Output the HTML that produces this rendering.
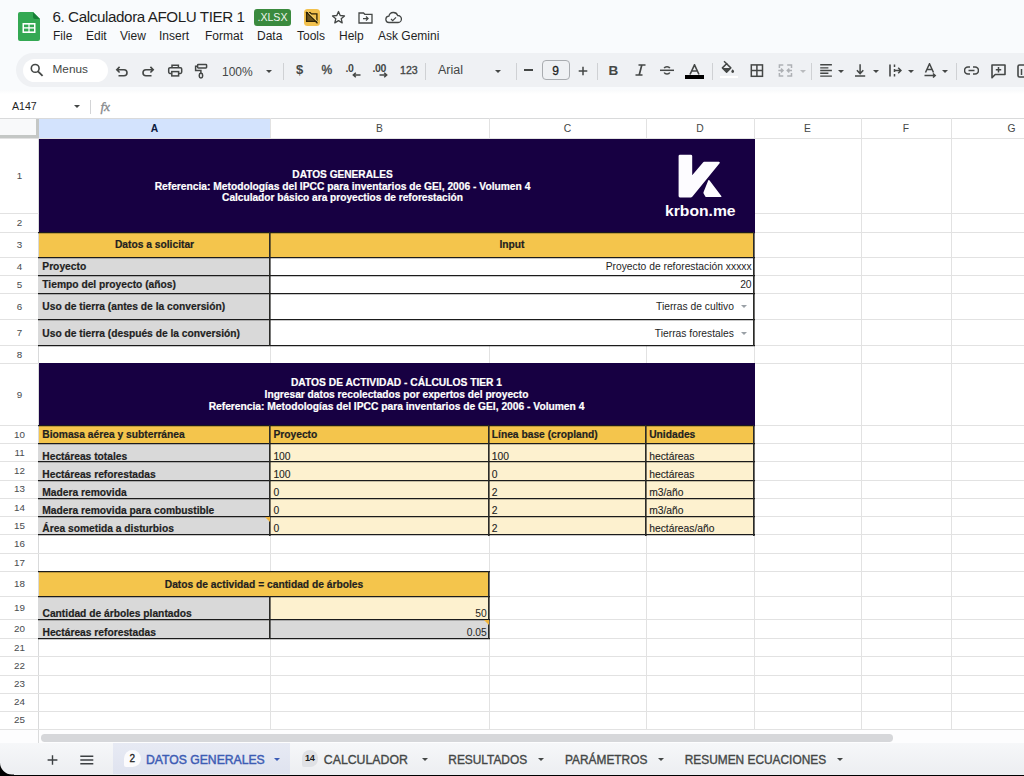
<!DOCTYPE html>
<html><head><meta charset="utf-8">
<style>
*{box-sizing:border-box;margin:0;padding:0}
html,body{width:1024px;height:776px;overflow:hidden;background:#f9fbfd;font-family:"Liberation Sans",sans-serif;position:relative}
.a{position:absolute}
.t{position:absolute;white-space:nowrap;line-height:1}
.b{font-weight:bold}
.menu{font-size:12px;color:#1f1f1f;top:30px}
.ico{position:absolute}
.tb{position:absolute;font-size:12px;color:#444746;white-space:nowrap;line-height:1}
.sep{position:absolute;top:62.5px;width:1px;height:17.5px;background:#cfd1d4}
.dd{position:absolute;width:0;height:0;border-left:3.5px solid transparent;border-right:3.5px solid transparent;border-top:3.5px solid #444746}
</style></head><body>

<!-- ===== TITLE BAR ===== -->
<svg class="ico" style="left:18px;top:12px" width="22" height="29" viewBox="0 0 22 29">
 <path d="M2 0H15L22 7V27a2 2 0 0 1-2 2H2a2 2 0 0 1-2-2V2a2 2 0 0 1 2-2z" fill="#34a853"/>
 <path d="M15 0L22 7H17a2 2 0 0 1-2-2z" fill="#188038"/>
 <rect x="4.5" y="11" width="13" height="10" fill="#fff"/>
 <rect x="6" y="12.6" width="4.4" height="2.6" fill="#34a853"/><rect x="11.6" y="12.6" width="4.4" height="2.6" fill="#34a853"/>
 <rect x="6" y="16.6" width="4.4" height="2.8" fill="#34a853"/><rect x="11.6" y="16.6" width="4.4" height="2.8" fill="#34a853"/>
</svg>
<div class="t" style="left:52.5px;top:8.6px;font-size:15.2px;color:#1f1f1f;word-spacing:-0.2px;letter-spacing:-0.38px">6. Calculadora AFOLU TIER 1</div>
<div class="a" style="left:254px;top:9px;width:37px;height:17px;background:#3a8a3e;border-radius:3px"></div>
<div class="t" style="left:254px;width:37px;text-align:center;top:12.3px;font-size:10.6px;color:#eef5ee">.XLSX</div>
<div class="a" style="left:303.7px;top:8.8px;width:16.2px;height:17px;background:#f2c14e;border-radius:3.5px"></div>
<svg class="ico" style="left:300px;top:6px" width="24" height="24" viewBox="300 6 24 24"><path d="M306.6 13.2L314.6 21.3H306.6z" fill="#3b2c0a" opacity="0.75"/><path d="M306.6 12.6h3.6l1.1 1.3h5.6v7.4h-10.3z" fill="none" stroke="#2e2306" stroke-width="1.3"/><path d="M306 12l11.5 11.2" stroke="#2e2306" stroke-width="1.3"/><path d="M307.3 11.3l10.8 10.6" stroke="#e9d37a" stroke-width="0.9"/></svg>
<svg class="ico" style="left:331px;top:10px" width="15" height="15" viewBox="0 0 15 15"><path d="M7.5 1.5l1.7 4 4.3.4-3.3 2.8 1 4.2-3.7-2.3-3.7 2.3 1-4.2L1.5 5.9l4.3-.4z" fill="none" stroke="#444746" stroke-width="1.3" stroke-linejoin="round"/></svg>
<svg class="ico" style="left:358px;top:11px" width="15" height="13" viewBox="0 0 15 13"><path d="M1 2h4.5l1.3 1.3H14V12H1z" fill="none" stroke="#444746" stroke-width="1.3"/><path d="M5 7.6h5M8 5.5l2.1 2.1L8 9.7" fill="none" stroke="#444746" stroke-width="1.2"/></svg>
<svg class="ico" style="left:385px;top:11px" width="17" height="13" viewBox="0 0 17 13"><path d="M4.2 11.5a3.2 3.2 0 0 1-.3-6.4 4.6 4.6 0 0 1 8.8-.6 3.5 3.5 0 0 1 .4 7z" fill="none" stroke="#444746" stroke-width="1.3"/><path d="M6 8l1.7 1.6L11 6.3" fill="none" stroke="#444746" stroke-width="1.2"/></svg>
<div class="t menu" style="left:53px">File</div>
<div class="t menu" style="left:86px">Edit</div>
<div class="t menu" style="left:120px">View</div>
<div class="t menu" style="left:159px">Insert</div>
<div class="t menu" style="left:205px">Format</div>
<div class="t menu" style="left:257px">Data</div>
<div class="t menu" style="left:297px">Tools</div>
<div class="t menu" style="left:339px">Help</div>
<div class="t menu" style="left:378px">Ask Gemini</div>


<!-- ===== TOOLBAR ===== -->
<div class="a" style="left:16px;top:53px;width:1040px;height:34px;background:#eff1f4;border-radius:17px"></div>
<div class="a" style="left:22.5px;top:58.5px;width:85.5px;height:23px;background:#fff;border-radius:11.5px"></div>
<svg class="ico" style="left:30px;top:63px" width="14" height="14" viewBox="0 0 14 14"><circle cx="5.2" cy="5.4" r="3.9" fill="none" stroke="#444746" stroke-width="1.6"/><path d="M8 8.3l4.6 4.5" stroke="#444746" stroke-width="1.8"/></svg>
<div class="tb" style="left:52.5px;top:63.5px;font-size:11.8px">Menus</div>
<!-- undo / redo -->
<svg class="ico" style="left:110px;top:58px" width="50" height="26" viewBox="110 58 50 26"><path d="M117 69.7H124a3 3 0 0 1 0 6H118.5M119.6 66.9L116.8 69.7 119.6 72.5" fill="none" stroke="#444746" stroke-width="1.6"/><path d="M153 69.7H146a3 3 0 0 0 0 6H151.5M150.4 66.9L153.2 69.7 150.4 72.5" fill="none" stroke="#444746" stroke-width="1.6"/></svg>

<!-- print -->
<svg class="ico" style="left:165px;top:62px" width="20" height="17" viewBox="165 62 20 17"><path d="M172 67.6V65.2h6.4v2.4" fill="none" stroke="#444746" stroke-width="1.5"/><path d="M171.6 73.4h-1.6a1.3 1.3 0 0 1-1.3-1.3V69a1.3 1.3 0 0 1 1.3-1.3h10.4a1.3 1.3 0 0 1 1.3 1.3v3.1a1.3 1.3 0 0 1-1.3 1.3h-1.6" fill="none" stroke="#444746" stroke-width="1.5"/><rect x="171.8" y="71.6" width="6.8" height="4.3" fill="none" stroke="#444746" stroke-width="1.5"/></svg>
<!-- paint format -->
<svg class="ico" style="left:193px;top:62px" width="16" height="18" viewBox="193 62 16 18"><rect x="197.6" y="64.6" width="9" height="3.4" rx="0.7" fill="none" stroke="#444746" stroke-width="1.5"/><path d="M197.6 66.3H195.6v4.1h5.3v2.8" fill="none" stroke="#444746" stroke-width="1.5"/><rect x="199.3" y="73.3" width="3.3" height="4.6" rx="1.65" fill="none" stroke="#444746" stroke-width="1.5"/></svg>
<div class="tb" style="left:222px;top:65.5px;font-size:12px">100%</div>
<div class="dd" style="left:265.5px;top:69.5px"></div>
<div class="sep" style="left:283px"></div>
<div class="tb b" style="left:296px;top:63px;font-size:13px">$</div>
<div class="tb" style="left:321.5px;top:64.2px;font-size:12px;-webkit-text-stroke:0.4px #444746">%</div>
<!-- .0 decrease -->
<div class="tb b" style="left:345.5px;top:62.5px;font-size:10.5px;letter-spacing:-0.3px">.0</div>
<svg class="ico" style="left:352px;top:72px" width="9" height="6" viewBox="0 0 9 6"><path d="M8.5 3H1.5M3.8 0.7L1.3 3l2.5 2.3" fill="none" stroke="#444746" stroke-width="1.5"/></svg>
<div class="tb b" style="left:372.5px;top:62.5px;font-size:10.5px;letter-spacing:-0.4px">.00</div>
<svg class="ico" style="left:379px;top:72px" width="9" height="6" viewBox="0 0 9 6"><path d="M0.5 3h7M5.2 0.7L7.7 3 5.2 5.3" fill="none" stroke="#444746" stroke-width="1.5"/></svg>
<div class="tb" style="left:400px;top:65px;font-size:10.6px;-webkit-text-stroke:0.35px #444746">123</div>
<div class="sep" style="left:425px"></div>
<div class="tb" style="left:438px;top:64px;font-size:12.5px">Arial</div>
<div class="dd" style="left:495px;top:69.5px"></div>
<div class="sep" style="left:515.5px"></div>
<div class="a" style="left:523.6px;top:69.2px;width:9.8px;height:1.8px;background:#444746"></div>
<div class="a" style="left:541.5px;top:60px;width:28px;height:20px;border:1.2px solid #a9acb0;border-radius:4px"></div>
<div class="tb" style="left:541.5px;width:28px;text-align:center;top:64.5px;font-size:12px;color:#1f1f1f;-webkit-text-stroke:0.3px #1f1f1f">9</div>
<svg class="ico" style="left:578px;top:65.5px" width="10" height="10" viewBox="0 0 10 10"><path d="M5 0.7v8.6M0.7 5h8.6" stroke="#444746" stroke-width="1.5"/></svg>
<div class="sep" style="left:597px"></div>
<div class="tb b" style="left:608.5px;top:63.5px;font-size:13.5px">B</div>
<svg class="ico" style="left:635px;top:64px" width="11" height="12" viewBox="0 0 11 12"><path d="M3.5 1h7M0.5 11h7M6.8 1L4.2 11" fill="none" stroke="#444746" stroke-width="1.7"/></svg>
<svg class="ico" style="left:659px;top:64px" width="16" height="13" viewBox="0 0 16 13"><path d="M1 6.3h14" stroke="#444746" stroke-width="1.5"/><path d="M10.8 4.2a3 2.2 0 0 0-5.6 0M5.2 8.5a3 2.3 0 0 0 5.6 0" fill="none" stroke="#444746" stroke-width="1.6"/></svg>
<svg class="ico" style="left:689px;top:63.5px" width="11" height="11" viewBox="0 0 11 11"><path d="M1 10.5L5.5 0.8 10 10.5M2.8 7h5.4" fill="none" stroke="#444746" stroke-width="1.6"/></svg>
<div class="a" style="left:684.5px;top:75.3px;width:19.5px;height:3.3px;background:#000"></div>
<div class="sep" style="left:711.5px"></div>
<svg class="ico" style="left:715px;top:56px" width="30" height="28" viewBox="715 56 30 28"><path d="M722.4 67.9L726.6 63.7 730.8 67.9 726.6 72.1z" fill="none" stroke="#444746" stroke-width="1.5" stroke-linejoin="round"/><path d="M722.4 67.9h8.4L726.6 72.1z" fill="#444746"/><path d="M724 61.2l3.2 3.1" stroke="#444746" stroke-width="1.5"/><path d="M732.7 69.3c-.9 1.1-1.4 1.6-1.4 2.2a1.4 1.4 0 0 0 2.8 0c0-.6-.5-1.1-1.4-2.2z" fill="#444746"/></svg>
<div class="a" style="left:720px;top:75.5px;width:18px;height:2.8px;background:#fff"></div>
<svg class="ico" style="left:748px;top:62px" width="18" height="18" viewBox="748 62 18 18"><rect x="751.3" y="64.9" width="11.2" height="11.4" fill="none" stroke="#444746" stroke-width="1.5"/><path d="M756.9 64.9v11.4M751.3 70.6h11.2" stroke="#444746" stroke-width="1.5"/></svg>
<svg class="ico" style="left:772px;top:60px" width="26" height="22" viewBox="772 60 26 22"><path d="M783.3 65.1h-3.9v2.8M779.4 72.9v3.1h3.9M787.2 65.1h4.3v2.8M791.5 72.9v3.1h-4.3M778.3 70.5h4.6M781 68.6l2 1.9-2 1.9M792 70.5h-4.6M789.3 68.6l-2 1.9 2 1.9" fill="none" stroke="#aeb1b5" stroke-width="1.5"/></svg>
<div class="dd" style="left:800px;top:69.5px;border-top-color:#b9bbbe"></div>
<div class="sep" style="left:811px"></div>
<svg class="ico" style="left:814px;top:58px" width="56" height="24" viewBox="814 58 56 24"><path d="M820.2 64.8h11.7M820.2 67.9h8.2M820.2 70.5h11.7M820.2 73.2h8.2M820.2 76.1h11.7" stroke="#444746" stroke-width="1.4"/><path d="M860.1 64.3v9.2M856.9 70.3l3.2 3.3 3.2-3.3M855 76.1h10.2" fill="none" stroke="#444746" stroke-width="1.5"/></svg>
<div class="dd" style="left:838px;top:69.5px"></div>

<div class="dd" style="left:872.5px;top:69.5px"></div>
<svg class="ico" style="left:889px;top:64px" width="13" height="13" viewBox="0 0 13 13"><path d="M1 0.5v12" stroke="#444746" stroke-width="1.6"/><path d="M5.5 0.5v2.5M5.5 5v3M5.5 10v2.5" stroke="#444746" stroke-width="1.5"/><path d="M5 6.5h7M9.2 3.8L12 6.5 9.2 9.2" fill="none" stroke="#444746" stroke-width="1.5"/></svg>
<div class="dd" style="left:907.5px;top:69.5px"></div>
<svg class="ico" style="left:923.5px;top:63px" width="13" height="15" viewBox="0 0 13 15"><path d="M1.5 9.5L5.5 0.8 9.5 9.5M3 6.5h5" fill="none" stroke="#444746" stroke-width="1.5"/><path d="M0.5 12.5h10.5M9 10.5l2.2 2-2.2 2" fill="none" stroke="#444746" stroke-width="1.5"/></svg>
<div class="dd" style="left:942px;top:69.5px"></div>
<div class="sep" style="left:955.5px"></div>
<svg class="ico" style="left:964px;top:66px" width="15" height="9" viewBox="0 0 15 9"><path d="M6 1H4a3.5 3.5 0 0 0 0 7h2M9 1h2a3.5 3.5 0 0 1 0 7H9M4.5 4.5h6" fill="none" stroke="#444746" stroke-width="1.6"/></svg>
<svg class="ico" style="left:990.5px;top:63.5px" width="15" height="15" viewBox="0 0 15 15"><path d="M1 1h13v9.5H4.2L1 13.8z" fill="none" stroke="#444746" stroke-width="1.6" stroke-linejoin="round"/><path d="M7.5 3v5.5M4.8 5.8h5.4" stroke="#444746" stroke-width="1.5"/></svg>
<svg class="ico" style="left:1017px;top:64px" width="10" height="14" viewBox="0 0 10 14"><rect x="1" y="1" width="12" height="12" rx="1.5" fill="none" stroke="#444746" stroke-width="1.6"/><path d="M4.5 5v6" stroke="#444746" stroke-width="1.5"/></svg>

<!-- ===== FORMULA BAR ===== -->
<div class="a" style="left:0;top:90px;width:1024px;height:4px;background:linear-gradient(#f9fafb,#fff)"></div>
<div class="a" style="left:0;top:94px;width:1024px;height:24px;background:#fff"></div>
<div class="t" style="left:12px;top:101px;font-size:10.6px;color:#1f1f1f">A147</div>
<div class="dd" style="left:73.5px;top:104.5px;border-left-width:3.2px;border-right-width:3.2px;border-top-width:3.4px"></div>
<div class="a" style="left:90px;top:99.5px;width:1px;height:14px;background:#d3d4d6"></div>
<div class="t" style="left:100.5px;top:100.3px;font-size:13.5px;color:#85888b;font-family:'Liberation Serif',serif;font-style:italic;letter-spacing:-0.2px;-webkit-text-stroke:0.3px #85888b">fx</div>

<div class="a" style="left:0px;top:118px;width:1024px;height:611px;background:#fff;"></div>
<div class="a" style="left:0px;top:119px;width:36px;height:17px;background:#f8f9fa;"></div>
<div class="a" style="left:0px;top:135px;width:39px;height:3.5px;background:#c4c7c5;"></div>
<div class="a" style="left:35.5px;top:118px;width:3.0px;height:20.5px;background:#c4c7c5;"></div>
<div class="a" style="left:39px;top:119px;width:231px;height:19px;background:#d3e3fd;"></div>
<div class="a" style="left:0px;top:118px;width:1024px;height:1px;background:#d9dadb;"></div>
<div class="a" style="left:270px;top:118px;width:1px;height:611px;background:#e2e2e2;"></div>
<div class="a" style="left:489px;top:118px;width:1px;height:611px;background:#e2e2e2;"></div>
<div class="a" style="left:646px;top:118px;width:1px;height:611px;background:#e2e2e2;"></div>
<div class="a" style="left:754px;top:118px;width:1px;height:611px;background:#e2e2e2;"></div>
<div class="a" style="left:861px;top:118px;width:1px;height:611px;background:#e2e2e2;"></div>
<div class="a" style="left:951px;top:118px;width:1px;height:611px;background:#e2e2e2;"></div>
<div class="a" style="left:38px;top:138px;width:1px;height:591px;background:#d9dadb;"></div>
<div class="a" style="left:0px;top:138px;width:1024px;height:1px;background:#e2e2e2;"></div>
<div class="a" style="left:0px;top:213px;width:1024px;height:1px;background:#e2e2e2;"></div>
<div class="a" style="left:0px;top:232px;width:1024px;height:1px;background:#e2e2e2;"></div>
<div class="a" style="left:0px;top:257px;width:1024px;height:1px;background:#e2e2e2;"></div>
<div class="a" style="left:0px;top:275px;width:1024px;height:1px;background:#e2e2e2;"></div>
<div class="a" style="left:0px;top:293px;width:1024px;height:1px;background:#e2e2e2;"></div>
<div class="a" style="left:0px;top:319px;width:1024px;height:1px;background:#e2e2e2;"></div>
<div class="a" style="left:0px;top:345px;width:1024px;height:1px;background:#e2e2e2;"></div>
<div class="a" style="left:0px;top:363px;width:1024px;height:1px;background:#e2e2e2;"></div>
<div class="a" style="left:0px;top:425px;width:1024px;height:1px;background:#e2e2e2;"></div>
<div class="a" style="left:0px;top:443px;width:1024px;height:1px;background:#e2e2e2;"></div>
<div class="a" style="left:0px;top:461px;width:1024px;height:1px;background:#e2e2e2;"></div>
<div class="a" style="left:0px;top:479.5px;width:1024px;height:1.0px;background:#e2e2e2;"></div>
<div class="a" style="left:0px;top:498px;width:1024px;height:1px;background:#e2e2e2;"></div>
<div class="a" style="left:0px;top:516px;width:1024px;height:1px;background:#e2e2e2;"></div>
<div class="a" style="left:0px;top:534.3px;width:1024px;height:1.0px;background:#e2e2e2;"></div>
<div class="a" style="left:0px;top:552.9px;width:1024px;height:1.0px;background:#e2e2e2;"></div>
<div class="a" style="left:0px;top:571px;width:1024px;height:1px;background:#e2e2e2;"></div>
<div class="a" style="left:0px;top:596px;width:1024px;height:1px;background:#e2e2e2;"></div>
<div class="a" style="left:0px;top:619px;width:1024px;height:1px;background:#e2e2e2;"></div>
<div class="a" style="left:0px;top:637.5px;width:1024px;height:1.0px;background:#e2e2e2;"></div>
<div class="a" style="left:0px;top:656.3px;width:1024px;height:1.0px;background:#e2e2e2;"></div>
<div class="a" style="left:0px;top:674.5px;width:1024px;height:1.0px;background:#e2e2e2;"></div>
<div class="a" style="left:0px;top:692.5px;width:1024px;height:1.0px;background:#e2e2e2;"></div>
<div class="a" style="left:0px;top:710.6px;width:1024px;height:1.0px;background:#e2e2e2;"></div>
<div class="a" style="left:0px;top:729px;width:1024px;height:1px;background:#e2e2e2;"></div>
<div class="a" style="left:39px;top:139px;width:715px;height:94px;background:#170042;"></div>
<div class="a" style="left:39px;top:233px;width:715px;height:25px;background:#f4c54c;"></div>
<div class="a" style="left:39px;top:258px;width:231px;height:88px;background:#d9d9d9;"></div>
<div class="a" style="left:270px;top:258px;width:484px;height:88px;background:#fff;"></div>
<div class="a" style="left:39px;top:364px;width:715px;height:62px;background:#170042;"></div>
<div class="a" style="left:39px;top:362.7px;width:715.5px;height:1.3000000000000114px;background:#170042;"></div>
<div class="a" style="left:39px;top:426px;width:715px;height:18px;background:#f4c54c;"></div>
<div class="a" style="left:39px;top:444px;width:231px;height:91.29999999999995px;background:#d9d9d9;"></div>
<div class="a" style="left:270px;top:444px;width:484px;height:91.29999999999995px;background:#fdf1cf;"></div>
<div class="a" style="left:39px;top:572px;width:450px;height:25px;background:#f4c54c;"></div>
<div class="a" style="left:39px;top:597px;width:231px;height:41.5px;background:#d9d9d9;"></div>
<div class="a" style="left:270px;top:597px;width:219px;height:23px;background:#fdf1cf;"></div>
<div class="a" style="left:270px;top:620px;width:219px;height:18.5px;background:#d9d9d9;"></div>
<div class="a" style="left:38px;top:232px;width:717px;height:1px;background:#1b1b1b;"></div>
<div class="a" style="left:38px;top:233px;width:717px;height:1px;background:rgba(0,0,0,0.22);"></div>
<div class="a" style="left:38px;top:257px;width:717px;height:1px;background:#1b1b1b;"></div>
<div class="a" style="left:38px;top:258px;width:717px;height:1px;background:rgba(0,0,0,0.22);"></div>
<div class="a" style="left:38px;top:275px;width:717px;height:1px;background:#1b1b1b;"></div>
<div class="a" style="left:38px;top:276px;width:717px;height:1px;background:rgba(0,0,0,0.22);"></div>
<div class="a" style="left:38px;top:293px;width:717px;height:1px;background:#1b1b1b;"></div>
<div class="a" style="left:38px;top:294px;width:717px;height:1px;background:rgba(0,0,0,0.22);"></div>
<div class="a" style="left:38px;top:319px;width:717px;height:1px;background:#1b1b1b;"></div>
<div class="a" style="left:38px;top:320px;width:717px;height:1px;background:rgba(0,0,0,0.22);"></div>
<div class="a" style="left:38px;top:345px;width:717px;height:1px;background:#1b1b1b;"></div>
<div class="a" style="left:38px;top:346px;width:717px;height:1px;background:rgba(0,0,0,0.22);"></div>
<div class="a" style="left:269px;top:232px;width:1px;height:114.19999999999999px;background:#2b2b28;"></div>
<div class="a" style="left:270px;top:232px;width:1px;height:114.19999999999999px;background:rgba(30,30,28,0.6);"></div>
<div class="a" style="left:753px;top:232px;width:1px;height:114.19999999999999px;background:#2b2b28;"></div>
<div class="a" style="left:754px;top:232px;width:1px;height:114.19999999999999px;background:rgba(30,30,28,0.6);"></div>
<div class="a" style="left:38px;top:425px;width:717px;height:1px;background:#1b1b1b;"></div>
<div class="a" style="left:38px;top:426px;width:717px;height:1px;background:rgba(0,0,0,0.22);"></div>
<div class="a" style="left:38px;top:443px;width:717px;height:1px;background:#1b1b1b;"></div>
<div class="a" style="left:38px;top:444px;width:717px;height:1px;background:rgba(0,0,0,0.22);"></div>
<div class="a" style="left:38px;top:461px;width:717px;height:1px;background:#1b1b1b;"></div>
<div class="a" style="left:38px;top:462px;width:717px;height:1px;background:rgba(0,0,0,0.22);"></div>
<div class="a" style="left:38px;top:479.5px;width:717px;height:1.0px;background:#1b1b1b;"></div>
<div class="a" style="left:38px;top:480.5px;width:717px;height:1.0px;background:rgba(0,0,0,0.22);"></div>
<div class="a" style="left:38px;top:498px;width:717px;height:1px;background:#1b1b1b;"></div>
<div class="a" style="left:38px;top:499px;width:717px;height:1px;background:rgba(0,0,0,0.22);"></div>
<div class="a" style="left:38px;top:516px;width:717px;height:1px;background:#1b1b1b;"></div>
<div class="a" style="left:38px;top:517px;width:717px;height:1px;background:rgba(0,0,0,0.22);"></div>
<div class="a" style="left:38px;top:534.3px;width:717px;height:1.0px;background:#1b1b1b;"></div>
<div class="a" style="left:38px;top:535.3px;width:717px;height:1.0px;background:rgba(0,0,0,0.22);"></div>
<div class="a" style="left:269px;top:425px;width:1px;height:110.5px;background:#2b2b28;"></div>
<div class="a" style="left:270px;top:425px;width:1px;height:110.5px;background:rgba(30,30,28,0.6);"></div>
<div class="a" style="left:488px;top:425px;width:1px;height:110.5px;background:#2b2b28;"></div>
<div class="a" style="left:489px;top:425px;width:1px;height:110.5px;background:rgba(30,30,28,0.6);"></div>
<div class="a" style="left:645px;top:425px;width:1px;height:110.5px;background:#2b2b28;"></div>
<div class="a" style="left:646px;top:425px;width:1px;height:110.5px;background:rgba(30,30,28,0.6);"></div>
<div class="a" style="left:753px;top:425px;width:1px;height:110.5px;background:#2b2b28;"></div>
<div class="a" style="left:754px;top:425px;width:1px;height:110.5px;background:rgba(30,30,28,0.6);"></div>
<div class="a" style="left:38px;top:571px;width:452px;height:1px;background:#1b1b1b;"></div>
<div class="a" style="left:38px;top:572px;width:452px;height:1px;background:rgba(0,0,0,0.22);"></div>
<div class="a" style="left:38px;top:596px;width:452px;height:1px;background:#1b1b1b;"></div>
<div class="a" style="left:38px;top:597px;width:452px;height:1px;background:rgba(0,0,0,0.22);"></div>
<div class="a" style="left:38px;top:619px;width:452px;height:1px;background:#1b1b1b;"></div>
<div class="a" style="left:38px;top:620px;width:452px;height:1px;background:rgba(0,0,0,0.22);"></div>
<div class="a" style="left:38px;top:637.5px;width:452px;height:1.0px;background:#1b1b1b;"></div>
<div class="a" style="left:38px;top:638.5px;width:452px;height:1.0px;background:rgba(0,0,0,0.22);"></div>
<div class="a" style="left:269px;top:596px;width:1px;height:42.700000000000045px;background:#2b2b28;"></div>
<div class="a" style="left:270px;top:596px;width:1px;height:42.700000000000045px;background:rgba(30,30,28,0.6);"></div>
<div class="a" style="left:488px;top:571px;width:1px;height:67.70000000000005px;background:#2b2b28;"></div>
<div class="a" style="left:489px;top:571px;width:1px;height:67.70000000000005px;background:rgba(30,30,28,0.6);"></div>
<div class="a" style="left:754px;top:139px;width:0.5px;height:94px;background:#170042;"></div>
<div class="a" style="left:754px;top:364px;width:0.5px;height:62px;background:#170042;"></div>
<div class="t" style="left:0.5px;width:38px;text-align:center;top:171.1px;font-size:9.8px;color:#4a4d50;-webkit-text-stroke:0.05px #4a4d50">1</div>
<div class="t" style="left:0.5px;width:38px;text-align:center;top:218.1px;font-size:9.8px;color:#4a4d50;-webkit-text-stroke:0.05px #4a4d50">2</div>
<div class="t" style="left:0.5px;width:38px;text-align:center;top:240.1px;font-size:9.8px;color:#4a4d50;-webkit-text-stroke:0.05px #4a4d50">3</div>
<div class="t" style="left:0.5px;width:38px;text-align:center;top:261.6px;font-size:9.8px;color:#4a4d50;-webkit-text-stroke:0.05px #4a4d50">4</div>
<div class="t" style="left:0.5px;width:38px;text-align:center;top:279.6px;font-size:9.8px;color:#4a4d50;-webkit-text-stroke:0.05px #4a4d50">5</div>
<div class="t" style="left:0.5px;width:38px;text-align:center;top:301.6px;font-size:9.8px;color:#4a4d50;-webkit-text-stroke:0.05px #4a4d50">6</div>
<div class="t" style="left:0.5px;width:38px;text-align:center;top:327.6px;font-size:9.8px;color:#4a4d50;-webkit-text-stroke:0.05px #4a4d50">7</div>
<div class="t" style="left:0.5px;width:38px;text-align:center;top:349.6px;font-size:9.8px;color:#4a4d50;-webkit-text-stroke:0.05px #4a4d50">8</div>
<div class="t" style="left:0.5px;width:38px;text-align:center;top:389.6px;font-size:9.8px;color:#4a4d50;-webkit-text-stroke:0.05px #4a4d50">9</div>
<div class="t" style="left:0.5px;width:38px;text-align:center;top:429.6px;font-size:9.8px;color:#4a4d50;-webkit-text-stroke:0.05px #4a4d50">10</div>
<div class="t" style="left:0.5px;width:38px;text-align:center;top:447.6px;font-size:9.8px;color:#4a4d50;-webkit-text-stroke:0.05px #4a4d50">11</div>
<div class="t" style="left:0.5px;width:38px;text-align:center;top:465.9px;font-size:9.8px;color:#4a4d50;-webkit-text-stroke:0.05px #4a4d50">12</div>
<div class="t" style="left:0.5px;width:38px;text-align:center;top:484.4px;font-size:9.8px;color:#4a4d50;-webkit-text-stroke:0.05px #4a4d50">13</div>
<div class="t" style="left:0.5px;width:38px;text-align:center;top:502.6px;font-size:9.8px;color:#4a4d50;-webkit-text-stroke:0.05px #4a4d50">14</div>
<div class="t" style="left:0.5px;width:38px;text-align:center;top:520.8px;font-size:9.8px;color:#4a4d50;-webkit-text-stroke:0.05px #4a4d50">15</div>
<div class="t" style="left:0.5px;width:38px;text-align:center;top:539.2px;font-size:9.8px;color:#4a4d50;-webkit-text-stroke:0.05px #4a4d50">16</div>
<div class="t" style="left:0.5px;width:38px;text-align:center;top:557.6px;font-size:9.8px;color:#4a4d50;-webkit-text-stroke:0.05px #4a4d50">17</div>
<div class="t" style="left:0.5px;width:38px;text-align:center;top:579.1px;font-size:9.8px;color:#4a4d50;-webkit-text-stroke:0.05px #4a4d50">18</div>
<div class="t" style="left:0.5px;width:38px;text-align:center;top:603.1px;font-size:9.8px;color:#4a4d50;-webkit-text-stroke:0.05px #4a4d50">19</div>
<div class="t" style="left:0.5px;width:38px;text-align:center;top:623.9px;font-size:9.8px;color:#4a4d50;-webkit-text-stroke:0.05px #4a4d50">20</div>
<div class="t" style="left:0.5px;width:38px;text-align:center;top:642.5px;font-size:9.8px;color:#4a4d50;-webkit-text-stroke:0.05px #4a4d50">21</div>
<div class="t" style="left:0.5px;width:38px;text-align:center;top:661.0px;font-size:9.8px;color:#4a4d50;-webkit-text-stroke:0.05px #4a4d50">22</div>
<div class="t" style="left:0.5px;width:38px;text-align:center;top:679.1px;font-size:9.8px;color:#4a4d50;-webkit-text-stroke:0.05px #4a4d50">23</div>
<div class="t" style="left:0.5px;width:38px;text-align:center;top:697.1px;font-size:9.8px;color:#4a4d50;-webkit-text-stroke:0.05px #4a4d50">24</div>
<div class="t" style="left:0.5px;width:38px;text-align:center;top:715.4px;font-size:9.8px;color:#4a4d50;-webkit-text-stroke:0.05px #4a4d50">25</div>
<div class="t" style="left:39px;width:231px;text-align:center;top:123.6px;font-size:10.3px;color:#0b1a3d;font-weight:bold">A</div>
<div class="t" style="left:270px;width:219px;text-align:center;top:123.6px;font-size:10.3px;color:#444746">B</div>
<div class="t" style="left:489px;width:157px;text-align:center;top:123.6px;font-size:10.3px;color:#444746">C</div>
<div class="t" style="left:646px;width:108px;text-align:center;top:123.6px;font-size:10.3px;color:#444746">D</div>
<div class="t" style="left:754px;width:107px;text-align:center;top:123.6px;font-size:10.3px;color:#444746">E</div>
<div class="t" style="left:861px;width:90px;text-align:center;top:123.6px;font-size:10.3px;color:#444746">F</div>
<div class="t" style="left:951px;width:121px;text-align:center;top:123.6px;font-size:10.3px;color:#444746">G</div>
<div class="t" style="left:42.5px;width:600px;text-align:center;top:170.07px;font-size:10.15px;font-weight:bold;color:#fff;-webkit-text-stroke:0.2px #fff;">DATOS GENERALES</div>
<div class="t" style="left:42.5px;width:600px;text-align:center;top:181.68px;font-size:10.25px;font-weight:bold;color:#fff;-webkit-text-stroke:0.2px #fff;">Referencia: Metodologías del IPCC para inventarios de GEI, 2006 - Volumen 4</div>
<div class="t" style="left:42.5px;width:600px;text-align:center;top:192.97px;font-size:10.15px;font-weight:bold;color:#fff;-webkit-text-stroke:0.2px #fff;">Calculador básico ara proyectios de reforestación</div>
<div class="t" style="left:-145.5px;width:600px;text-align:center;top:239.88px;font-size:10.25px;font-weight:bold;color:#1f1f1f;-webkit-text-stroke:0.2px #1f1f1f;">Datos a solicitar</div>
<div class="t" style="left:212px;width:600px;text-align:center;top:239.88px;font-size:10.25px;font-weight:bold;color:#1f1f1f;-webkit-text-stroke:0.2px #1f1f1f;">Input</div>
<div class="t" style="left:42.3px;top:261.88px;font-size:10.25px;font-weight:bold;color:#1f1f1f;-webkit-text-stroke:0.2px #1f1f1f;">Proyecto</div>
<div class="t" style="left:42.3px;top:279.88px;font-size:10.25px;font-weight:bold;color:#1f1f1f;-webkit-text-stroke:0.2px #1f1f1f;">Tiempo del proyecto (años)</div>
<div class="t" style="left:42.3px;top:302.38px;font-size:10.25px;font-weight:bold;color:#1f1f1f;-webkit-text-stroke:0.2px #1f1f1f;">Uso de tierra (antes de la conversión)</div>
<div class="t" style="left:42.3px;top:328.78px;font-size:10.25px;font-weight:bold;color:#1f1f1f;-webkit-text-stroke:0.2px #1f1f1f;">Uso de tierra (después de la conversión)</div>
<div class="t" style="left:351.6px;width:400px;text-align:right;top:261.83px;font-size:10.3px;font-weight:normal;color:#1f1f1f">Proyecto de reforestación xxxxx</div>
<div class="t" style="left:351.6px;width:400px;text-align:right;top:279.83px;font-size:10.3px;font-weight:normal;color:#1f1f1f">20</div>
<div class="t" style="left:334px;width:400px;text-align:right;top:302.33px;font-size:10.3px;font-weight:normal;color:#1f1f1f">Tierras de cultivo</div>
<div class="t" style="left:334px;width:400px;text-align:right;top:328.73px;font-size:10.3px;font-weight:normal;color:#1f1f1f">Tierras forestales</div>
<div class="dd" style="left:741px;top:305px;border-top-color:#9aa0a6;border-left-width:3.5px;border-right-width:3.5px;border-top-width:3.5px"></div>
<div class="dd" style="left:741px;top:331.5px;border-top-color:#9aa0a6;border-left-width:3.5px;border-right-width:3.5px;border-top-width:3.5px"></div>
<div class="t" style="left:96.5px;width:600px;text-align:center;top:378.38px;font-size:10.25px;font-weight:bold;color:#fff;-webkit-text-stroke:0.2px #fff;">DATOS DE ACTIVIDAD - CÁLCULOS TIER 1</div>
<div class="t" style="left:96.5px;width:600px;text-align:center;top:390.12px;font-size:10.2px;font-weight:bold;color:#fff;-webkit-text-stroke:0.2px #fff;">Ingresar datos recolectados por expertos del proyecto</div>
<div class="t" style="left:96.5px;width:600px;text-align:center;top:402.38px;font-size:10.25px;font-weight:bold;color:#fff;-webkit-text-stroke:0.2px #fff;">Referencia: Metodologías del IPCC para inventarios de GEI, 2006 - Volumen 4</div>
<div class="t" style="left:42.3px;top:430.08px;font-size:10.25px;font-weight:bold;color:#1f1f1f;-webkit-text-stroke:0.2px #1f1f1f;">Biomasa aérea y subterránea</div>
<div class="t" style="left:273.4px;top:430.08px;font-size:10.25px;font-weight:bold;color:#1f1f1f;-webkit-text-stroke:0.2px #1f1f1f;">Proyecto</div>
<div class="t" style="left:491.8px;top:430.08px;font-size:10.25px;font-weight:bold;color:#1f1f1f;-webkit-text-stroke:0.2px #1f1f1f;">Línea base (cropland)</div>
<div class="t" style="left:649.2px;top:430.08px;font-size:10.25px;font-weight:bold;color:#1f1f1f;-webkit-text-stroke:0.2px #1f1f1f;">Unidades</div>
<div class="t" style="left:42.3px;top:451.88px;font-size:10.25px;font-weight:bold;color:#1f1f1f;-webkit-text-stroke:0.2px #1f1f1f;">Hectáreas totales</div>
<div class="t" style="left:273.4px;top:451.83px;font-size:10.3px;font-weight:normal;color:#1f1f1f;-webkit-text-stroke:0.12px #1f1f1f;">100</div>
<div class="t" style="left:491.8px;top:451.83px;font-size:10.3px;font-weight:normal;color:#1f1f1f;-webkit-text-stroke:0.12px #1f1f1f;">100</div>
<div class="t" style="left:649.2px;top:451.83px;font-size:10.3px;font-weight:normal;color:#1f1f1f;-webkit-text-stroke:0.12px #1f1f1f;">hectáreas</div>
<div class="t" style="left:42.3px;top:469.58px;font-size:10.25px;font-weight:bold;color:#1f1f1f;-webkit-text-stroke:0.2px #1f1f1f;">Hectáreas reforestadas</div>
<div class="t" style="left:273.4px;top:469.53px;font-size:10.3px;font-weight:normal;color:#1f1f1f;-webkit-text-stroke:0.12px #1f1f1f;">100</div>
<div class="t" style="left:491.8px;top:469.53px;font-size:10.3px;font-weight:normal;color:#1f1f1f;-webkit-text-stroke:0.12px #1f1f1f;">0</div>
<div class="t" style="left:649.2px;top:469.53px;font-size:10.3px;font-weight:normal;color:#1f1f1f;-webkit-text-stroke:0.12px #1f1f1f;">hectáreas</div>
<div class="t" style="left:42.3px;top:487.58px;font-size:10.25px;font-weight:bold;color:#1f1f1f;-webkit-text-stroke:0.2px #1f1f1f;">Madera removida</div>
<div class="t" style="left:273.4px;top:487.53px;font-size:10.3px;font-weight:normal;color:#1f1f1f;-webkit-text-stroke:0.12px #1f1f1f;">0</div>
<div class="t" style="left:491.8px;top:487.53px;font-size:10.3px;font-weight:normal;color:#1f1f1f;-webkit-text-stroke:0.12px #1f1f1f;">2</div>
<div class="t" style="left:649.2px;top:487.53px;font-size:10.3px;font-weight:normal;color:#1f1f1f;-webkit-text-stroke:0.12px #1f1f1f;">m3/año</div>
<div class="t" style="left:42.3px;top:506.18px;font-size:10.25px;font-weight:bold;color:#1f1f1f;-webkit-text-stroke:0.2px #1f1f1f;">Madera removida para combustible</div>
<div class="t" style="left:273.4px;top:506.13px;font-size:10.3px;font-weight:normal;color:#1f1f1f;-webkit-text-stroke:0.12px #1f1f1f;">0</div>
<div class="t" style="left:491.8px;top:506.13px;font-size:10.3px;font-weight:normal;color:#1f1f1f;-webkit-text-stroke:0.12px #1f1f1f;">2</div>
<div class="t" style="left:649.2px;top:506.13px;font-size:10.3px;font-weight:normal;color:#1f1f1f;-webkit-text-stroke:0.12px #1f1f1f;">m3/año</div>
<div class="t" style="left:42.3px;top:524.18px;font-size:10.25px;font-weight:bold;color:#1f1f1f;-webkit-text-stroke:0.2px #1f1f1f;">Área sometida a disturbios</div>
<div class="t" style="left:273.4px;top:524.13px;font-size:10.3px;font-weight:normal;color:#1f1f1f;-webkit-text-stroke:0.12px #1f1f1f;">0</div>
<div class="t" style="left:491.8px;top:524.13px;font-size:10.3px;font-weight:normal;color:#1f1f1f;-webkit-text-stroke:0.12px #1f1f1f;">2</div>
<div class="t" style="left:649.2px;top:524.13px;font-size:10.3px;font-weight:normal;color:#1f1f1f;-webkit-text-stroke:0.12px #1f1f1f;">hectáreas/año</div>
<div class="t" style="left:-36px;width:600px;text-align:center;top:580.38px;font-size:10.25px;font-weight:bold;color:#1f1f1f;-webkit-text-stroke:0.2px #1f1f1f;">Datos de actividad = cantidad de árboles</div>
<div class="t" style="left:42.5px;top:609.28px;font-size:10.25px;font-weight:bold;color:#1f1f1f;-webkit-text-stroke:0.2px #1f1f1f;">Cantidad de árboles plantados</div>
<div class="t" style="left:42.5px;top:627.78px;font-size:10.25px;font-weight:bold;color:#1f1f1f;-webkit-text-stroke:0.2px #1f1f1f;">Hectáreas reforestadas</div>
<div class="t" style="left:86.80000000000001px;width:400px;text-align:right;top:609.23px;font-size:10.3px;font-weight:normal;color:#1f1f1f">50</div>
<div class="t" style="left:86.80000000000001px;width:400px;text-align:right;top:627.73px;font-size:10.3px;font-weight:normal;color:#1f1f1f">0.05</div>
<div class="a" style="left:265px;top:517px;width:0;height:0;border-left:5px solid transparent;border-top:5px solid #f0b43a"></div>
<div class="a" style="left:484px;top:620px;width:0;height:0;border-left:5px solid transparent;border-top:5px solid #f0b43a"></div>
<!-- ===== LOGO ===== -->
<svg class="ico" style="left:670px;top:150px" width="60" height="52" viewBox="670 150 60 52">
 <path d="M680 154.7h10.8a1.4 1.4 0 0 1 1.4 1.4V175.2L703 162.4a1.6 1.6 0 0 1 1.2-.7h14.6a1 1 0 0 1 .8 1.6L692.5 196.6a2 2 0 0 1-1.5.8H680a1.4 1.4 0 0 1-1.4-1.4V156.1a1.4 1.4 0 0 1 1.4-1.4z" fill="#fdfcff"/>
 <path d="M708.3 180.3a.7.7 0 0 1 1.1-.1L721.3 196a.7.7 0 0 1-.5 1.1H706.5a1.4 1.4 0 0 1-1.2-.6l-1.7-3a1.4 1.4 0 0 1 0-1.4z" fill="#fdfcff"/>
</svg>
<div class="t" style="left:664.5px;top:203.5px;font-size:14px;font-weight:bold;color:#fdfcff;transform:scaleX(1.12);transform-origin:0 0">krbon.me</div>

<!-- ===== SCROLLBAR + TABS ===== -->
<div class="a" style="left:0;top:729.5px;width:1024px;height:13.5px;background:#fdfdfe"></div>
<div class="a" style="left:38px;top:729.5px;width:1px;height:13.5px;background:#dadbdc"></div>
<div class="a" style="left:40.8px;top:734.3px;width:852px;height:7.4px;background:#d6d7da;border-radius:3.7px"></div>
<div class="a" style="left:0;top:743px;width:1024px;height:31.5px;background:linear-gradient(#f6f7f9,#eceef1)"></div>
<div class="a" style="left:113.2px;top:743.3px;width:177px;height:30.7px;background:linear-gradient(#e7eaf4,#dfe3ef)"></div>
<svg class="ico" style="left:47px;top:754.5px" width="11" height="10" viewBox="0 0 11 10"><path d="M5.5 0.3v9.4M0.6 5h9.8" stroke="#3c4043" stroke-width="1.4"/></svg>
<svg class="ico" style="left:79.5px;top:754.5px" width="14" height="10" viewBox="0 0 14 10"><path d="M0.3 1.2h13M0.3 5h13M0.3 8.8h13" stroke="#3c4043" stroke-width="1.4"/></svg>
<div class="a" style="left:123.8px;top:749.8px;width:17px;height:17px;background:#fbfbfd;border-radius:8.5px 8.5px 8.5px 2px"></div>
<div class="t" style="left:123.8px;width:17px;text-align:center;top:754px;font-size:10px;color:#1f1f1f;-webkit-text-stroke:0.3px #1f1f1f">2</div>
<div class="t" style="left:146px;top:754.3px;font-size:12.2px;color:#3d5cb4;-webkit-text-stroke:0.45px #3d5cb4">DATOS GENERALES</div>
<div class="dd" style="left:273.5px;top:758px;border-top-color:#3b5bb5"></div>
<div class="a" style="left:301.5px;top:750px;width:16.5px;height:16.5px;background:#dfe1e5;border-radius:8.25px 8.25px 8.25px 2px"></div>
<div class="t b" style="left:301.5px;width:16.5px;text-align:center;top:754.2px;font-size:9.2px;color:#1f1f1f;letter-spacing:-0.3px">14</div>
<div class="t" style="left:323.8px;top:754.3px;font-size:12.3px;color:#444746;-webkit-text-stroke:0.35px #444746">CALCULADOR</div>
<div class="dd" style="left:421.5px;top:758px"></div>
<div class="t" style="left:448.3px;top:754.8px;font-size:11.9px;color:#444746;-webkit-text-stroke:0.35px #444746">RESULTADOS</div>
<div class="dd" style="left:537.5px;top:758px"></div>
<div class="t" style="left:565px;top:754.8px;font-size:11.9px;color:#444746;-webkit-text-stroke:0.35px #444746">PARÁMETROS</div>
<div class="dd" style="left:657.5px;top:758px"></div>
<div class="t" style="left:684.7px;top:754.8px;font-size:11.9px;color:#444746;-webkit-text-stroke:0.35px #444746">RESUMEN ECUACIONES</div>
<div class="dd" style="left:836.5px;top:758px"></div>
<div class="a" style="left:0;top:774.5px;width:1024px;height:2px;background:#000"></div>
<svg class="ico" style="left:0;top:760px" width="14" height="16" viewBox="0 0 14 16"><path d="M0 0v16h14v-1.5H12A12 12 0 0 1 0 2.5z" fill="#000"/></svg>

</body></html>
